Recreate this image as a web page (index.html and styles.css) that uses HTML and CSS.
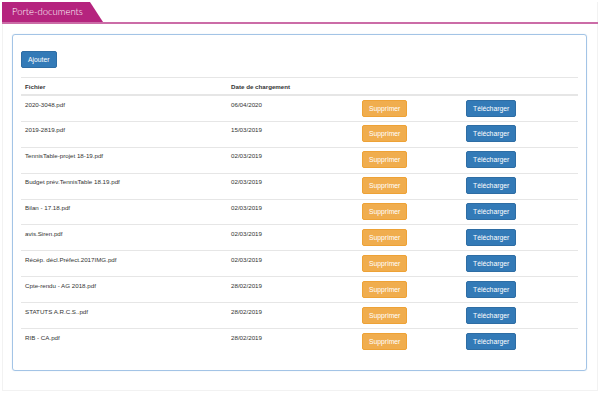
FILE: index.html
```html
<!DOCTYPE html>
<html lang="fr">
<head>
    <meta charset="UTF-8">
    <meta name="viewport" content="width=device-width, initial-scale=1.0">
    <title>Porte-documents</title>
    <link rel="stylesheet" href="styles.css">
</head>
<body>
<div class="page">
    <div class="tabbar">
        <div class="tab">Porte-documents</div>
    </div>
    <div class="content">
        <div class="panel">
            <button class="btn btn-primary">Ajouter</button>
            <table class="table">
                <thead>
                    <tr>
                        <th class="col-file">Fichier</th>
                        <th class="col-date">Date de chargement</th>
                        <th class="col-del"></th>
                        <th class="col-dl"></th>
                    </tr>
                </thead>
                <tbody>
                    <tr>
                        <td>2020-3048.pdf</td>
                        <td>06/04/2020</td>
                        <td><button class="btn btn-warning">Supprimer</button></td>
                        <td><button class="btn btn-primary">Télécharger</button></td>
                    </tr>
                    <tr>
                        <td>2019-2819.pdf</td>
                        <td>15/03/2019</td>
                        <td><button class="btn btn-warning">Supprimer</button></td>
                        <td><button class="btn btn-primary">Télécharger</button></td>
                    </tr>
                    <tr>
                        <td>TennisTable-projet 18-19.pdf</td>
                        <td>02/03/2019</td>
                        <td><button class="btn btn-warning">Supprimer</button></td>
                        <td><button class="btn btn-primary">Télécharger</button></td>
                    </tr>
                    <tr>
                        <td>Budget prév.TennisTable 18.19.pdf</td>
                        <td>02/03/2019</td>
                        <td><button class="btn btn-warning">Supprimer</button></td>
                        <td><button class="btn btn-primary">Télécharger</button></td>
                    </tr>
                    <tr>
                        <td>Bilan - 17.18.pdf</td>
                        <td>02/03/2019</td>
                        <td><button class="btn btn-warning">Supprimer</button></td>
                        <td><button class="btn btn-primary">Télécharger</button></td>
                    </tr>
                    <tr>
                        <td>avis.Siren.pdf</td>
                        <td>02/03/2019</td>
                        <td><button class="btn btn-warning">Supprimer</button></td>
                        <td><button class="btn btn-primary">Télécharger</button></td>
                    </tr>
                    <tr>
                        <td>Récép. décl.Préfect.2017IMG.pdf</td>
                        <td>02/03/2019</td>
                        <td><button class="btn btn-warning">Supprimer</button></td>
                        <td><button class="btn btn-primary">Télécharger</button></td>
                    </tr>
                    <tr>
                        <td>Cpte-rendu - AG 2018.pdf</td>
                        <td>28/02/2019</td>
                        <td><button class="btn btn-warning">Supprimer</button></td>
                        <td><button class="btn btn-primary">Télécharger</button></td>
                    </tr>
                    <tr>
                        <td>STATUTS A.R.C.S..pdf</td>
                        <td>28/02/2019</td>
                        <td><button class="btn btn-warning">Supprimer</button></td>
                        <td><button class="btn btn-primary">Télécharger</button></td>
                    </tr>
                    <tr>
                        <td>RIB - CA.pdf</td>
                        <td>28/02/2019</td>
                        <td><button class="btn btn-warning">Supprimer</button></td>
                        <td><button class="btn btn-primary">Télécharger</button></td>
                    </tr>
                </tbody>
            </table>
        </div>
    </div>
</div>
</body>
</html>
```

FILE: styles.css
```css
body {
    margin: 0;
    background-color: #fff;
    font-family: "Liberation Sans", Arial, sans-serif;
    color: #333;
}

.page {
    margin: 2px 2px 0;
    height: 389px;
    box-sizing: border-box;
    border: 1px solid #f2f2f2;
    border-top: none;
}

.tabbar {
    border-bottom: 2px solid #cb6ca7;
    margin-left: -1px;
    margin-right: -1px;
}

.tab {
    width: 101px;
    height: 20px;
    box-sizing: border-box;
    padding-left: 10px;
    background-color: #b5247e;
    color: #fff;
    font-family: Lato, "Open Sans", sans-serif;
    font-size: 9.5px;
    font-weight: 300;
    line-height: 20px;
    clip-path: polygon(0 0, 88px 0, 100% 100%, 0 100%);
}

.content {
    padding: 10px 10px 20px 9px;
}

.panel {
    border: 1px solid #a3c4e6;
    border-radius: 3px;
    padding: 16px 8px 16px;
    box-shadow: 0 0 1px rgba(51, 122, 183, 0.3);
}

.btn {
    display: inline-block;
    font-family: "Liberation Sans", Arial, sans-serif;
    font-size: 6.8px;
    line-height: 9px;
    padding: 3px 6px;
    border: 1px solid transparent;
    border-radius: 2px;
    color: #fff;
    cursor: pointer;
    vertical-align: top;
}

.btn-primary {
    background-color: #337ab7;
    border-color: #2e6da4;
}

.btn-warning {
    background-color: #f0ad4e;
    border-color: #eea236;
}

.table {
    width: 100%;
    margin-top: 8px;
    border-collapse: collapse;
    font-size: 6.2px;
}

.table th,
.table td {
    text-align: left;
    vertical-align: top;
    padding: 4px 4px;
    line-height: 9px;
}

.table th {
    font-weight: bold;
    padding-top: 3.5px;
    padding-bottom: 3.5px;
    border-top: 1px solid #e6e6e6;
    border-bottom: 2px solid #e6e6e6;
}

.table td {
    border-top: 1px solid #e6e6e6;
    padding-top: 3.6px;
    padding-bottom: 4.3px;
}

.table tbody tr:first-child td {
    border-top: none;
}

.col-file { width: 198px; }
.col-date { width: 123px; }
.col-del { width: 96px; }
```
